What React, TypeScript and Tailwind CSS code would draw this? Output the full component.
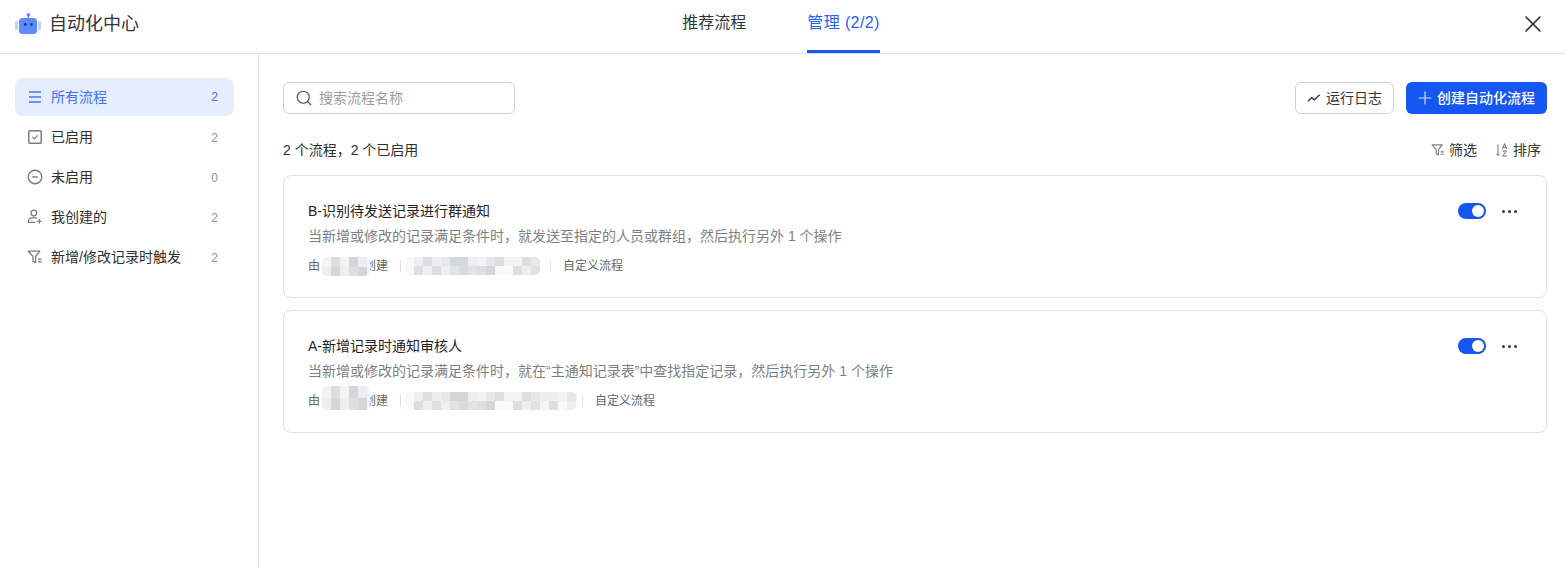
import { Search, Plus, X } from "lucide-react";

const font = "font-['Liberation_Sans','Noto_Sans_CJK_SC',sans-serif]";

function RobotLogo() {
  return (
    <svg width="26" height="22" viewBox="0 0 26 22" fill="none">
      <circle cx="13.3" cy="1.8" r="1.8" fill="#5B8CFF" />
      <rect x="12.6" y="2" width="1.4" height="4" fill="#5B8CFF" />
      <rect x="0" y="8" width="3" height="9" rx="1.5" fill="#BFD2FF" />
      <rect x="23" y="8" width="3" height="9" rx="1.5" fill="#BFD2FF" />
      <rect x="4" y="5" width="18" height="16" rx="3.5" fill="#5B8CFF" />
      <circle cx="10.3" cy="11.5" r="1.4" fill="#1F3B80" />
      <circle cx="16.5" cy="11.5" r="1.4" fill="#1F3B80" />
    </svg>
  );
}

function MenuIcon() {
  return (
    <svg width="16" height="16" viewBox="0 0 16 16" fill="none" stroke="#3f73f0" strokeWidth="1.7">
      <path d="M2 3h12M2 8h12M2 13h12" />
    </svg>
  );
}

function CheckBoxIcon() {
  return (
    <svg width="16" height="16" viewBox="0 0 16 16" fill="none" stroke="#7a7c82" strokeWidth="1.5">
      <rect x="1.8" y="1.8" width="12.4" height="12.4" rx="1" />
      <path d="M5.4 8l2 2 3.3-3.6" strokeWidth="1.2" />
    </svg>
  );
}

function MinusCircleIcon() {
  return (
    <svg width="16" height="16" viewBox="0 0 16 16" fill="none" stroke="#7a7c82" strokeWidth="1.4">
      <circle cx="8" cy="8" r="6.8" />
      <path d="M5.2 8h5.6" />
    </svg>
  );
}

function UserPlusIcon() {
  return (
    <svg width="16" height="16" viewBox="0 0 16 16" fill="none" stroke="#7a7c82" strokeWidth="1.3">
      <circle cx="6.8" cy="4" r="2.8" />
      <path d="M9.8 9.2C8.9 8.9 7.9 8.7 6.8 8.7c-3 0-5.4 1.4-5.4 3.2v1.5h7" />
      <path d="M12.4 10.2v4.4M10.2 12.4h4.4" />
    </svg>
  );
}

function FilterIcon({ size = 16 }: { size?: number }) {
  return (
    <svg width={size} height={size} viewBox="0 0 16 16" fill="none" stroke="#7a7c82" strokeWidth="1.3">
      <path d="M1.2 2.2h11.6L8.6 7.4v6.2L6 12.2V7.4z" strokeLinejoin="round" />
      <path d="M11 10.2h3.8M11 12.8h3.8" />
    </svg>
  );
}

function SortIcon() {
  return (
    <svg width="14" height="16" viewBox="0 0 14 16" fill="none" stroke="#6B6F76" strokeWidth="1">
      <path d="M3 2.5v11M1.2 11.7L3 13.5l1.8-1.8" />
      <path d="M7.4 7.2l2.2-5.6 2.2 5.6M8.2 5.4h2.8" />
      <path d="M7.6 9h3.9l-3.9 5h4.1" />
    </svg>
  );
}

function TrendIcon() {
  return (
    <svg width="14" height="14" viewBox="0 0 14 14" fill="none" stroke="#33363B" strokeWidth="1.4">
      <path d="M1 10.2l3.6-3.6 2.8 2.2 5.2-5" />
    </svg>
  );
}

const menuItems = [
  { label: "所有流程", count: 2, icon: <MenuIcon />, active: true },
  { label: "已启用", count: 2, icon: <CheckBoxIcon /> },
  { label: "未启用", count: 0, icon: <MinusCircleIcon /> },
  { label: "我创建的", count: 2, icon: <UserPlusIcon /> },
  { label: "新增/修改记录时触发", count: 2, icon: <FilterIcon /> },
];

const tones = [
  "bg-[#eeeef0]", "bg-[#dddee0]", "bg-[#f3f3f4]", "bg-[#d5d6d9]", "bg-[#e8e8ea]",
  "bg-[#e1e2e4]", "bg-[#f9f9f9]", "bg-[#d9dadc]",
];

// blurred-out names in the meta line; cells fill column by column
function Mosaic({ cells, className }: { cells: number[]; className: string }) {
  return (
    <div className={`grid grid-flow-col auto-cols-[9px] overflow-hidden rounded-[5px] ${className}`}>
      {cells.map((c, i) => (
        <div key={i} className={tones[c]} />
      ))}
    </div>
  );
}

const shortCells = [2, 0, 1, 3, 2, 0, 3, 1, 0, 3, 2, 2];
const longCells = [
  6, 6, 0, 1, 1, 0, 0, 1, 4, 0, 3, 5, 3, 7, 0, 5, 2, 1, 4, 3,
  1, 6, 2, 6, 2, 1, 1, 0, 4, 5, 0, 2, 0, 1, 2, 6, 4, 0, 2, 2,
];

function FlowCard({
  title,
  desc,
  nameClass,
  longClass,
}: {
  title: string;
  desc: string;
  nameClass: string;
  longClass: string;
}) {
  return (
    <div className="flex h-[123px] justify-between rounded-[8px] border border-[#dedfe1] bg-white pl-6 pr-[29px] pt-[26px]">
      <div>
        <div className="text-[14px] leading-[18px] text-[#1f2329]">{title}</div>
        <div className="mt-[7px] text-[14px] leading-[18px] text-[#7c7f85]">{desc}</div>
        <div className="mt-3 flex items-center text-[12px] leading-[18px] text-[#63666b]">
          <span>由</span>
          <div className="relative h-[18px] w-11">
            <Mosaic cells={shortCells} className={`absolute left-[2px] z-10 w-12 ${nameClass}`} />
          </div>
          <span>创建</span>
          <div className="ml-3 h-3 w-px bg-[#dedfe1]" />
          <Mosaic cells={longCells} className={`ml-1 h-[18px] grid-rows-[9px_9px] ${longClass}`} />
          <div className="h-3 w-px bg-[#e6e7e9]" />
          <span className="ml-3">自定义流程</span>
        </div>
      </div>
      <div className="mt-[1px] flex h-4 items-center gap-4">
        <div className="flex h-4 w-7 items-center justify-end rounded-full bg-[#1557f0] pr-[2px]">
          <div className="h-3 w-3 rounded-full bg-white" />
        </div>
        <div className="flex w-[15px] justify-between">
          <div className="h-[3px] w-[3px] rounded-full bg-[#33363b]" />
          <div className="h-[3px] w-[3px] rounded-full bg-[#33363b]" />
          <div className="h-[3px] w-[3px] rounded-full bg-[#33363b]" />
        </div>
      </div>
    </div>
  );
}

export default function App() {
  return (
    <div className={`flex h-[568px] flex-col overflow-hidden bg-white ${font}`}>
      <header className="grid h-[54px] shrink-0 grid-cols-[1fr_auto_1fr] border-b border-[#dfe0e2]">
        <div className="flex items-center gap-2 pb-[5px] pl-[15px]">
          <RobotLogo />
          <span className="text-[18px] text-[#33363b]">自动化中心</span>
        </div>
        <div className="flex gap-[61px] pr-[3px]">
          <div className="flex h-[53px] items-start pt-[12px] text-[16px] leading-[22px] text-[#33363b]">推荐流程</div>
          <div className="flex h-[53px] items-start border-b-[3px] border-[#1557f0] pt-[12px] text-[16px] leading-[22px] tracking-[0.4px] text-[#1f63f0]">
            管理 (2/2)
          </div>
        </div>
        <div className="flex items-center justify-end pb-[5px] pr-[18px]">
          <X size={28} strokeWidth={1.4} className="text-[#2b2e33]" />
        </div>
      </header>

      <div className="flex min-h-0 flex-1">
        <aside className="flex w-[259px] shrink-0 flex-col gap-[2px] border-r border-[#dfe0e2] pl-[15px] pr-6 pt-6">
          {menuItems.map((item) => (
            <div
              key={item.label}
              className={`flex h-[38px] items-center rounded-[8px] pl-3 pr-4 ${item.active ? "bg-[#e6edfc]" : ""}`}
            >
              <div className="flex w-4 justify-center">{item.icon}</div>
              <span className={`ml-2 flex-1 text-[14px] ${item.active ? "text-[#3f73f0]" : "text-[#2b2e33]"}`}>
                {item.label}
              </span>
              <span className={`text-[12px] ${item.active ? "text-[#3f73f0]" : "mt-[1px] text-[#8f9298]"}`}>
                {item.count}
              </span>
            </div>
          ))}
        </aside>

        <main className="min-w-0 flex-1 pl-6 pr-[18px] pt-7">
          <div className="flex items-center justify-between">
            <div className="flex h-8 w-[232px] items-center gap-[6px] rounded-[6px] border border-[#cfd0d3] pl-[11px]">
              <Search size={18} strokeWidth={1.6} className="text-[#55585d]" />
              <span className="text-[14px] text-[#9a9da2]">搜索流程名称</span>
            </div>
            <div className="flex gap-3">
              <div className="flex h-8 w-[99px] items-center justify-center gap-[5px] rounded-[6px] border border-[#cfd0d3] text-[14px] text-[#33363b]">
                <TrendIcon />
                运行日志
              </div>
              <div className="flex h-8 w-[141px] items-center gap-[2px] rounded-[6px] bg-[#1557f0] pl-[9px] text-[14px] font-medium text-white">
                <Plus size={20} strokeWidth={1.4} className="text-[#d5e1fd]" />
                创建自动化流程
              </div>
            </div>
          </div>

          <div className="mt-[27px] flex h-[18px] items-center justify-between pr-[6px] text-[14px] text-[#2b2e33]">
            <span>2 个流程，2 个已启用</span>
            <div className="flex items-center gap-[18px] text-[#33363b]">
              <span className="flex items-center gap-1">
                <FilterIcon size={14} />
                筛选
              </span>
              <span className="flex items-center gap-1">
                <SortIcon />
                排序
              </span>
            </div>
          </div>

          <div className="mt-4 flex flex-col gap-3">
            <FlowCard
              title="B-识别待发送记录进行群通知"
              desc="当新增或修改的记录满足条件时，就发送至指定的人员或群组，然后执行另外 1 个操作"
              nameClass="top-0 h-[19px] grid-rows-[10px_9px]"
              longClass="mr-[10px] w-[135px]"
            />
            <FlowCard
              title="A-新增记录时通知审核人"
              desc="当新增或修改的记录满足条件时，就在“主通知记录表”中查找指定记录，然后执行另外 1 个操作"
              nameClass="-top-[6px] h-6 grid-rows-[12px_12px]"
              longClass="mr-[5px] w-[172px]"
            />
          </div>
        </main>
      </div>
    </div>
  );
}
